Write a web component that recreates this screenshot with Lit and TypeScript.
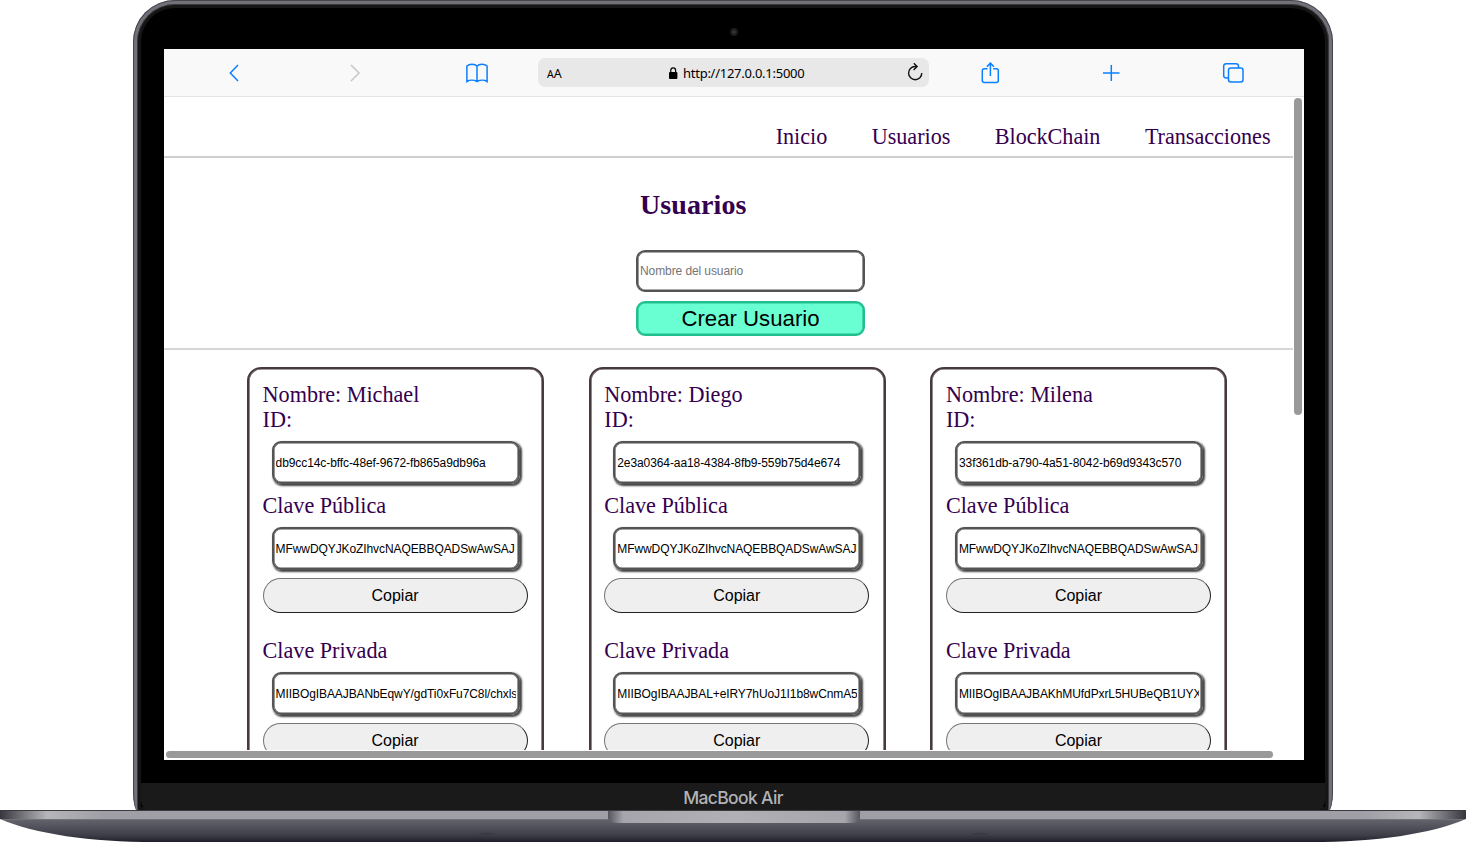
import { LitElement, html, css, svg } from "lit";
import { customElement, property } from "lit/decorators.js";

interface User {
  name: string;
  id: string;
  pub: string;
  priv: string;
}

const USERS: User[] = [
  { name: "Michael", id: "db9cc14c-bffc-48ef-9672-fb865a9db96a", pub: "MFwwDQYJKoZIhvcNAQEBBQADSwAwSAJ", priv: "MIIBOgIBAAJBANbEqwY/gdTi0xFu7C8l/chxls" },
  { name: "Diego", id: "2e3a0364-aa18-4384-8fb9-559b75d4e674", pub: "MFwwDQYJKoZIhvcNAQEBBQADSwAwSAJB", priv: "MIIBOgIBAAJBAL+eIRY7hUoJ1I1b8wCnmA5G" },
  { name: "Milena", id: "33f361db-a790-4a51-8042-b69d9343c570", pub: "MFwwDQYJKoZIhvcNAQEBBQADSwAwSAJB", priv: "MIIBOgIBAAJBAKhMUfdPxrL5HUBeQB1UYX" },
];

@customElement("user-card")
export class UserCard extends LitElement {
  @property({ attribute: false }) user!: User;

  static styles = css`
    :host {
      display: block;
      box-sizing: border-box;
      width: 297px;
      height: 480px;
      border: 2px solid #463a3c;
      box-shadow: inset 0 0 0 0.6px #463a3c;
      border-radius: 14px;
      padding: 13px 13.600px 0;
      font: 22.2px/25px "Liberation Serif", serif;
      letter-spacing: -0.03px;
      color: #34004f;
    }
    .label { height: 25px; white-space: nowrap; }
    .field {
      box-sizing: border-box;
      width: 248px;
      height: 43px;
      margin: 9px 0 0 9px;
      border: 2px solid #545454;
      border-radius: 9px;
      box-shadow: inset 0 0 0 0.6px #545454, 1.700px 1.700px 2px #444;
      padding: 0 2px;
      font: 12px/40px "Liberation Sans", Arial, sans-serif;
      letter-spacing: -0.09px;
      color: #000;
    }
    .clip { overflow: hidden; white-space: nowrap; }
    .copy {
      display: block;
      box-sizing: border-box;
      width: 265px;
      height: 35px;
      margin: 8px 0 25px;
      padding: 0;
      border: 1px solid;
      border-color: #767676 #222 #222 #767676;
      border-radius: 18px;
      background: #efefef;
      color: #000;
      font: 16px "Liberation Sans", Arial, sans-serif;
    }
    .pub { margin-top: 9px; }
  `;

  render() {
    const u = this.user;
    return html`
      <div class="label">Nombre: ${u.name}</div>
      <div class="label">ID:</div>
      <div class="field"><div class="clip">${u.id}</div></div>
      <div class="label pub">Clave Pública</div>
      <div class="field"><div class="clip">${u.pub}</div></div>
      <button class="copy">Copiar</button>
      <div class="label">Clave Privada</div>
      <div class="field"><div class="clip">${u.priv}</div></div>
      <button class="copy">Copiar</button>
    `;
  }
}

const icon = (cls: string, body: unknown) =>
  html`<svg class="icon ${cls}" width="24" height="24" viewBox="0 0 24 24" fill="none" stroke="currentColor" stroke-width="1.5">${body}</svg>`;

@customElement("browser-bar")
export class BrowserBar extends LitElement {
  static styles = css`
    :host {
      display: flex;
      align-items: center;
      box-sizing: border-box;
      height: 48px;
      border-bottom: 1px solid #e4e4e4;
      background: #f9f9f9;
      color: #0a7fff;
    }
    .icon { flex: none; display: block; }
    .back { margin-left: 58px; }
    .next { margin-left: 96px; color: #c6c6c6; }
    .book { margin-left: 99px; }
    .share { margin-left: 49px; }
    .plus { margin-left: 97px; }
    .tabs { margin-left: 98px; }
    .address {
      display: flex;
      align-items: center;
      box-sizing: border-box;
      width: 391px;
      height: 29px;
      margin-left: 49px;
      padding: 0 2px 0 9px;
      border-radius: 7px;
      background: #e8e8e8;
      color: #000;
      font: 13px "Noto Sans", sans-serif;
    }
    .aa { width: 121px; font-size: 12.500px; letter-spacing: -0.1px; padding-top: 1px; }
    .aa small { font-size: 10.500px; }
    .lock { flex: none; }
    .url { flex: 1; padding-left: 4px; letter-spacing: -0.26px; }
  `;

  render() {
    return html`
      ${icon("back", svg`<path d="M16 4 8.3 12l7.7 8"/>`)}
      ${icon("next", svg`<path d="M9 4l8 8-8 8"/>`)}
      ${icon("book", svg`<path d="M12 5C9.800 2.700 4.500 2.600 1.900 5V20.500C4.500 18.800 9 18.800 12 20.500 15 18.800 19.500 18.800 22.100 20.500V5C19.500 2.600 14.200 2.700 12 5ZM12 5V20.500"/>`)}
      <div class="address">
        <span class="aa"><small>A</small>A</span>
        <svg class="lock" width="11" height="14" viewBox="0 0 11 14">
          <rect x="1" y="6" width="8.400" height="7" rx="1"/>
          <path d="M2.800 6.500V4.300a2.400 2.400 0 0 1 4.800 0v2.200" fill="none" stroke="#000" stroke-width="1.200"/>
        </svg>
        <span class="url">http://127.0.0.1:5000</span>
        <svg width="24" height="24" viewBox="0 0 24 24" fill="none" stroke="#111" stroke-width="1.400">
          <path d="M13.500 5.500H12a6.600 6.600 0 1 0 6.800 6.600M10.800 2.300 14.100 5.600l-3.500 3.500"/>
        </svg>
      </div>
      ${icon("share", svg`<path d="M9.500 7.700H6.300a2 2 0 0 0-2 2V19.500a2 2 0 0 0 2 2H18.300a2 2 0 0 0 2-2V9.700a2 2 0 0 0-2-2H15.200M12.400 15V2.300M8.800 5.700l3.600-3.600L16 5.700"/>`)}
      ${icon("plus", svg`<path d="M12.300 4V20M4 12H20.500"/>`)}
      ${icon("tabs", svg`<rect x="7.500" y="7" width="14.500" height="14" rx="2.200"/><path d="M7.500 17H5a2.300 2.300 0 0 1-2.300-2.300V5A2.300 2.300 0 0 1 5 2.700H15.200A2.300 2.300 0 0 1 17.500 5V7"/>`)}
    `;
  }
}

@customElement("app-root")
export class AppRoot extends LitElement {
  static styles = css`
    :host {
      display: block;
      width: 1466px;
      height: 842px;
      overflow: hidden;
      background: #fff;
    }
    .lid {
      box-sizing: border-box;
      position: relative;
      width: 1200px;
      height: 811px;
      margin: 0 auto;
      background: #000;
      border: 4px solid #71717a;
      border-bottom: 0;
      border-radius: 42px 42px 5px 5px / 42px 42px 20px 20px;
      box-shadow: inset 0 0 0 1px #38383c, inset 0 0 0 4px #151515;
      padding: 45px 27px 0;
    }
    .rim {
      position: absolute;
      inset: -4px -4px 0;
      border: 1px solid #45454a;
      border-bottom: 0;
      border-radius: inherit;
    }
    .camera {
      position: absolute;
      left: 593px;
      top: 24px;
      width: 4px;
      height: 4px;
      border: 2px solid #1b1b1e;
      border-radius: 50%;
      background: #303035;
    }
    .screen {
      width: 1140px;
      height: 711px;
      overflow: hidden;
      background: #fff;
      position: relative;
    }
    .page {
      width: 1129px;
      height: 653px;
      overflow: hidden;
      font: 22.2px/25px "Liberation Serif", serif;
      color: #34004f;
    }
    nav {
      display: flex;
      justify-content: flex-end;
      gap: 44.500px;
      box-sizing: border-box;
      height: 61px;
      padding: 27px 22.500px 0 0;
      border-bottom: 2px solid #cfcfcf;
      letter-spacing: -0.04px;
    }
    .create {
      box-sizing: border-box;
      height: 192px;
      padding: 30px 0 0 472px;
      border-bottom: 2px solid #d6d6d6;
    }
    h1 { margin: 0 0 29px 4px; font-size: 28px; line-height: 33px; letter-spacing: 0.08px; }
    .name, .submit {
      display: block;
      box-sizing: border-box;
      width: 229px;
      border-radius: 9px;
      font-family: "Liberation Sans", Arial, sans-serif;
    }
    .name {
      height: 42px;
      border: 2px solid #545454;
      box-shadow: inset 0 0 0 0.6px #545454;
      padding: 0 2px;
      font-size: 12px;
      letter-spacing: -0.09px;
      background: #fff;
    }
    .name::placeholder { color: #757575; }
    .submit {
      height: 35px;
      margin-top: 9px;
      padding: 0;
      border: 2px solid #22bf8e;
      box-shadow: inset 0 0 0 0.6px #22bf8e;
      background: #69ffd2;
      color: #000;
      font-size: 22.200px;
    }
    .cards {
      display: flex;
      gap: 44.700px;
      padding: 17px 0 0 83px;
    }
    .vbar, .hbar {
      position: absolute;
      border-radius: 4px;
      background: #999;
    }
    .vbar { right: 2px; top: 49px; width: 8px; height: 317px; }
    .hbar { left: 2px; bottom: 2px; width: 1107px; height: 7px; }
    .chin {
      box-sizing: border-box;
      height: 29px;
      margin: 23px -23px 0;
      border-radius: 0 0 12px 12px;
      background: #1a1a1a;
      color: #b2b2b6;
      text-align: center;
      font: 500 17.500px/29px Inter, sans-serif;
      letter-spacing: -0.65px;
    }
    .base { display: block; width: 1466px; height: 32px; margin-top: -1px; position: relative; }
  `;

  render() {
    return html`
      <div class="lid">
        <div class="rim"></div>
        <div class="camera"></div>
        <div class="screen">
          <browser-bar></browser-bar>
          <div class="page">
            <nav><span>Inicio</span><span>Usuarios</span><span>BlockChain</span><span>Transacciones</span></nav>
            <section class="create">
              <h1>Usuarios</h1>
              <input class="name" placeholder="Nombre del usuario" />
              <button class="submit">Crear Usuario</button>
            </section>
            <section class="cards">${USERS.map((u) => html`<user-card .user=${u}></user-card>`)}</section>
          </div>
          <div class="vbar"></div>
          <div class="hbar"></div>
        </div>
        <div class="chin">MacBook Air</div>
      </div>
      <svg class="base" viewBox="0 0 1466 32">
        <defs>
          <linearGradient id="under" x2="0" y2="1">
            <stop offset="0" stop-color="#64656c"/><stop offset=".35" stop-color="#50515a"/><stop offset=".7" stop-color="#3d3e48"/><stop offset="1" stop-color="#1d1e29"/>
          </linearGradient>
          <linearGradient id="deck">
            <stop offset="0" stop-color="#35353b"/><stop offset=".012" stop-color="#66666c"/><stop offset=".032" stop-color="#b5b5ba"/><stop offset=".07" stop-color="#9f9fa5"/>
            <stop offset=".93" stop-color="#9f9fa5"/><stop offset=".968" stop-color="#b5b5ba"/><stop offset=".988" stop-color="#66666c"/><stop offset="1" stop-color="#35353b"/>
          </linearGradient>
          <linearGradient id="notch">
            <stop offset="0" stop-color="#55555c"/><stop offset=".06" stop-color="#a5a5ab"/><stop offset=".5" stop-color="#b0b0b5"/><stop offset=".94" stop-color="#a5a5ab"/><stop offset="1" stop-color="#55555c"/>
          </linearGradient>
        </defs>
        <path d="M0 9C35 24 90 32 155 32H1311C1376 32 1431 24 1466 9Z" fill="url(#under)"/>
        <path d="M0 0H1466V9H0Z" fill="url(#deck)"/>
        <path d="M0 .5H1466" stroke="#3a3a40"/>
        <path d="M2 9.500H1464" stroke="#77777e" opacity=".7"/>
        <path d="M608 1H860V8Q860 13 850 13H618Q608 13 608 8Z" fill="url(#notch)"/>
        <ellipse cx="487" cy="24" rx="8" ry="1.200" fill="#393a44"/>
        <ellipse cx="980" cy="24" rx="8" ry="1.200" fill="#393a44"/>
      </svg>
    `;
  }
}
